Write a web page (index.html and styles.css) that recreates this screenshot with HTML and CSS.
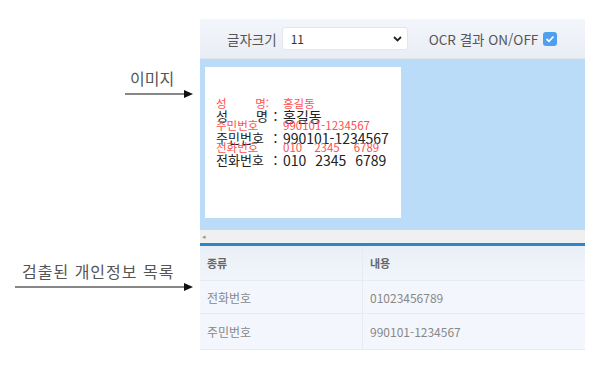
FILE: index.html
```html
<!DOCTYPE html>
<html lang="ko">
<head>
    <meta charset="UTF-8">
    <meta name="viewport" content="width=device-width, initial-scale=1.0">
    <title>OCR 개인정보 검출</title>
    <link rel="stylesheet" href="styles.css">
</head>
<body>

<div class="page">
    <div class="notes">
        <div class="note note-image">
            <span class="note-text">이미지</span>
            <svg class="arrow" width="68" height="8" viewBox="0 0 68 8">
                <line x1="0" y1="4" x2="60" y2="4" stroke="#111" stroke-width="1.2"/>
                <polygon points="59,0 68,4 59,8" fill="#111"/>
            </svg>
        </div>
        <div class="note note-list">
            <span class="note-text">검출된 개인정보 목록</span>
            <svg class="arrow" width="178" height="8" viewBox="0 0 178 8">
                <line x1="0" y1="4" x2="170" y2="4" stroke="#111" stroke-width="1.2"/>
                <polygon points="169,0 178,4 169,8" fill="#111"/>
            </svg>
        </div>
    </div>

    <div class="panel">
        <div class="toolbar">
            <label class="tool-label" for="fontSize">글자크기</label>
            <div class="select-box" id="fontSize">
                <span>11</span>
                <svg width="9" height="6" viewBox="0 0 9 6">
                    <path d="M1 1 L4.5 4.5 L8 1" fill="none" stroke="#222" stroke-width="1.8"/>
                </svg>
            </div>
            <span class="tool-label ocr">OCR 결과 ON/OFF</span>
            <span class="check">
                <svg width="10" height="8" viewBox="0 0 10 8">
                    <path d="M1.5 4 L4 6.3 L8.5 1.5" fill="none" stroke="#fff" stroke-width="1.7"/>
                </svg>
            </span>
        </div>

        <div class="viewer">
            <div class="doc">
                <div class="doc-line">
                    <span class="ocr-text"><span class="ocr-key">성 명:</span><span>홍길동</span></span>
                    <span class="key">성 명</span><span class="colon">:</span><span>홍길동</span>
                </div>
                <div class="doc-line">
                    <span class="ocr-text"><span class="ocr-key">주민번호</span><span>990101-1234567</span></span>
                    <span class="key">주민번호</span><span class="colon">:</span><span>990101-1234567</span>
                </div>
                <div class="doc-line">
                    <span class="ocr-text"><span class="ocr-key">전화번호</span><span>010</span><span class="gap-a">2345</span><span class="gap-b">6789</span></span>
                    <span class="key">전화번호</span><span class="colon">:</span><span class="phone">010 2345 6789</span>
                </div>
            </div>
        </div>

        <div class="hscroll"><span class="scroll-arrow">◂</span></div>

        <table class="result">
            <thead>
                <tr>
                    <th class="col-kind">종류</th>
                    <th>내용</th>
                </tr>
            </thead>
            <tbody>
                <tr>
                    <td>전화번호</td>
                    <td>01023456789</td>
                </tr>
                <tr>
                    <td>주민번호</td>
                    <td>990101-1234567</td>
                </tr>
            </tbody>
        </table>
    </div>
</div>

</body>
</html>
```

FILE: styles.css
```css
body {
    margin: 0;
    font-family: "Noto Sans CJK KR", "Noto Sans", sans-serif;
    background: #fff;
}
.page {
    display: flex;
    height: 367px;
}
.notes {
    width: 200px;
    display: flex;
    flex-direction: column;
}
.note {
    display: flex;
    flex-direction: column;
    color: #555;
    font-size: 16px;
}
.note-image {
    margin-top: 67px;
    padding-left: 125px;
}
.note-image .note-text {
    padding-left: 5px;
    line-height: 23px;
}
.note-list {
    margin-top: 162px;
    padding-left: 15px;
}
.note-list .note-text {
    padding-left: 7px;
    line-height: 23px;
    letter-spacing: 1px;
}
.arrow {
    display: block;
    margin-top: 0;
}

.panel {
    width: 385px;
    margin-top: 19px;
    height: 331px;
    display: flex;
    flex-direction: column;
    background: #f2f5fb;
}
.toolbar {
    height: 40px;
    box-sizing: border-box;
    display: flex;
    align-items: center;
    padding-left: 27px;
    background: linear-gradient(#f3f6fc, #e9edf4);
    border-bottom: 1px solid #e0e5ec;
}
.tool-label {
    font-size: 13.5px;
    color: #555;
}
.select-box {
    width: 126px;
    height: 23px;
    box-sizing: border-box;
    margin-left: 5px;
    padding: 0 5px 0 8px;
    display: flex;
    align-items: center;
    justify-content: space-between;
    background: #fff;
    border: 1px solid #e3e6ea;
    border-radius: 3px;
    font-size: 12px;
    color: #333;
}
.ocr {
    margin-left: 21px;
}
.check {
    width: 14px;
    height: 14px;
    margin-left: 5px;
    border-radius: 3px;
    background: #4d9ff0;
    display: flex;
    align-items: center;
    justify-content: center;
}

.viewer {
    height: 171px;
    background: #bbdcf8;
    padding: 8px 0 0 5px;
    box-sizing: border-box;
}
.doc {
    width: 196px;
    height: 151px;
    background: #fff;
    box-sizing: border-box;
    padding: 38px 0 0 11px;
    font-size: 14px;
    color: #222;
}
.doc-line {
    position: relative;
    display: flex;
    line-height: 22px;
    white-space: nowrap;
}
.key {
    width: 52px;
    font-size: 13px;
    text-align-last: justify;
}
.colon {
    width: 15px;
    text-align: center;
}
.phone {
    word-spacing: 5px;
}
.ocr-text {
    position: absolute;
    left: 0;
    top: -9px;
    display: flex;
    font-size: 11.5px;
    line-height: 14px;
    color: #ff5050;
}
.ocr-key {
    width: 53px;
    margin-right: 14px;
    text-align-last: justify;
}
.doc-line:nth-child(2) .ocr-key,
.doc-line:nth-child(3) .ocr-key {
    text-align-last: auto;
}
.gap-a {
    margin-left: 12px;
}
.gap-b {
    margin-left: 14px;
}

.hscroll {
    height: 13px;
    background: #f0f0f0;
    border-bottom: 3px solid #2f86c6;
    font-size: 7px;
    color: #999;
    line-height: 13px;
    padding-left: 2px;
}

.result {
    width: 100%;
    border-collapse: collapse;
    font-size: 12px;
}
.result th,
.result td {
    text-align: left;
    padding: 0 0 0 7px;
    border-bottom: 1px solid #e6ebf2;
}
.result th {
    height: 34px;
    font-weight: bold;
    font-size: 11px;
    color: #666;
    background: linear-gradient(#eaeff6, #f1f5fb);
}
.result td {
    height: 32px;
    color: #888;
    background: #f3f6fc;
}
.result tbody tr:last-child td {
    height: 35px;
}
.result .col-kind {
    width: 155px;
    border-right: 1px solid #e6ebf2;
}
.result td:first-child {
    border-right: 1px solid #e6ebf2;
}
```
